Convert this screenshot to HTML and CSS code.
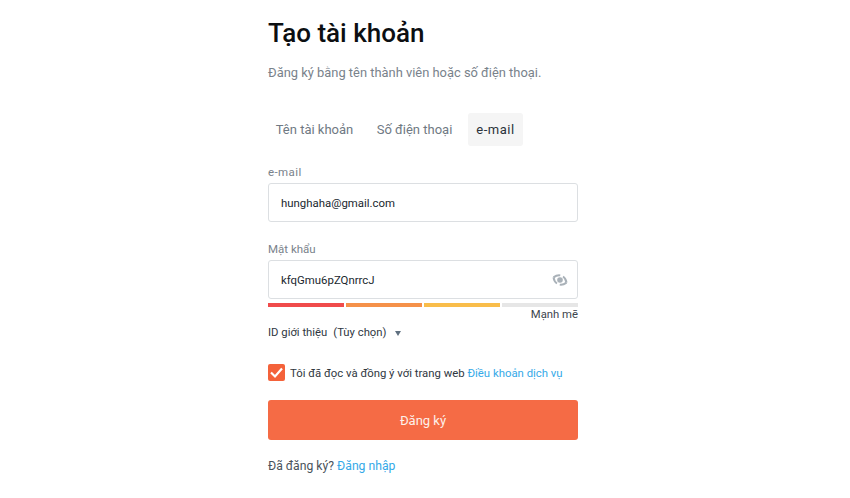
FILE: index.html
```html
<!DOCTYPE html>
<html lang="vi">
<head>
    <meta charset="UTF-8">
    <title>Tạo tài khoản</title>
    <link rel="stylesheet" href="styles.css">
</head>
<body>
    <div class="signup">
        <h1 class="title">Tạo tài khoản</h1>
        <p class="subtitle">Đăng ký bằng tên thành viên hoặc số điện thoại.</p>

        <div class="tabs">
            <span class="tab">Tên tài khoản</span>
            <span class="tab">Số điện thoại</span>
            <span class="tab active">e-mail</span>
        </div>

        <label class="field-label email-label">e-mail</label>
        <div class="input">hunghaha@gmail.com</div>

        <label class="field-label password-label">Mật khẩu</label>
        <div class="input">
            <span>kfqGmu6pZQnrrcJ</span>
            <svg class="eye" width="16" height="16" viewBox="0 0 16 16">
                <g transform="rotate(22 8 8)" fill="none" stroke="#a9b1b8" stroke-width="2">
                    <path d="M1 8 C2.500 5.500 4.500 4 6.500 3.600"/>
                    <path d="M9.500 3.600 C11.500 4 13.500 5.500 15 8"/>
                    <path d="M15 8 C13.500 10.500 11.500 12 9.500 12.400"/>
                    <path d="M6.500 12.400 C4.500 12 2.500 10.500 1 8"/>
                </g>
                <circle cx="8" cy="8" r="2.800" fill="#a9b1b8"/>
            </svg>
        </div>
        <div class="strength">
            <span class="bar red"></span>
            <span class="bar orange"></span>
            <span class="bar yellow"></span>
            <span class="bar"></span>
        </div>
        <div class="strength-text">Mạnh mẽ</div>

        <div class="referral">
            <span>ID giới thiệu</span>
            <span>(Tùy chọn)</span>
            <span class="caret"></span>
        </div>

        <div class="agree">
            <span class="checkbox">
                <svg width="17" height="17" viewBox="0 0 17 17">
                    <path d="M3 8.500 L7 12.500 L14 4.500" fill="none" stroke="#fff" stroke-width="2.200"/>
                </svg>
            </span>
            <span>Tôi đã đọc và đồng ý với trang web <a href="#">Điều khoản dịch vụ</a></span>
        </div>

        <button class="submit">Đăng ký</button>

        <p class="login">Đã đăng ký? <a href="#">Đăng nhập</a></p>
    </div>
</body>
</html>
```

FILE: styles.css
```css
body {
    margin: 0;
    background: #fff;
    font-family: Roboto, "Liberation Sans", sans-serif;
    color: #1f2933;
}
a {
    color: #35a9e8;
    text-decoration: none;
}
.signup {
    width: 310px;
    margin-left: 268px;
    padding-top: 17px;
}
.title {
    margin: 0;
    font-size: 26px;
    line-height: 32px;
    font-weight: 500;
    color: #0c0f12;
}
.subtitle {
    margin: 16px 0 0;
    font-size: 12.900px;
    line-height: 16px;
    color: #79828b;
}
.tabs {
    display: grid;
    grid-template-columns: 93px 91px 55px;
    gap: 8px;
    margin-top: 32px;
}
.tab {
    font-size: 13px;
    line-height: 33px;
    text-align: center;
    color: #6f7983;
    border-radius: 3px;
}
.tab.active {
    color: #2a323a;
    background: #f5f5f5;
    letter-spacing: 0.500px;
}
.field-label {
    display: block;
    font-size: 11.500px;
    line-height: 14px;
    color: #79828b;
}
.email-label {
    margin-top: 19px;
    letter-spacing: 0.400px;
}
.password-label {
    margin-top: 20px;
}
.input {
    display: flex;
    align-items: center;
    justify-content: space-between;
    box-sizing: border-box;
    height: 39px;
    margin-top: 4px;
    padding: 0 9px 0 12px;
    border: 1px solid #dcdfe2;
    border-radius: 3px;
    font-size: 11.400px;
    color: #20272e;
}
.strength {
    display: flex;
    gap: 2px;
    margin-top: 4px;
}
.bar {
    flex: 1;
    height: 4px;
    background: #e6e6e6;
}
.bar.red {
    background: #f04b4b;
}
.bar.orange {
    background: #f59149;
}
.bar.yellow {
    background: #f9bd4a;
}
.strength-text {
    margin-top: 1px;
    font-size: 11.300px;
    line-height: 14px;
    text-align: right;
    color: #3c454d;
}
.referral {
    display: flex;
    align-items: center;
    gap: 6px;
    margin-top: 3px;
    font-size: 11.300px;
    line-height: 16px;
    color: #2f373f;
}
.caret {
    width: 0;
    height: 0;
    margin-left: 2px;
    border-left: 3.500px solid transparent;
    border-right: 3.500px solid transparent;
    border-top: 5px solid #5f7080;
}
.agree {
    display: flex;
    align-items: center;
    gap: 5px;
    margin-top: 23px;
    font-size: 11.350px;
    white-space: nowrap;
    color: #2f373f;
}
.checkbox {
    display: flex;
    width: 17px;
    height: 17px;
    background: #f4623a;
    border-radius: 2px;
}
.submit {
    display: block;
    width: 100%;
    height: 40px;
    margin-top: 19px;
    border: none;
    border-radius: 3px;
    background: #f56b45;
    color: #fdf0ea;
    font-family: inherit;
    font-size: 13px;
}
.login {
    margin: 18px 0 0;
    font-size: 12.200px;
    line-height: 16px;
    color: #4a535b;
}
```
